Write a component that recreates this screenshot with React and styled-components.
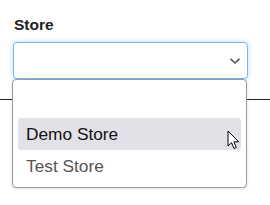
import React from "react";
import styled, { createGlobalStyle } from "styled-components";

const Global = createGlobalStyle`
  html, body { margin: 0; padding: 0; background: #fff; }
  body { font-family: "Liberation Sans", Arial, sans-serif; width: 270px; height: 205px; overflow: hidden; }
`;

const Page = styled.div`
  position: relative;
  width: 270px;
  height: 205px;
`;

const Field = styled.div`
  display: flex;
  flex-direction: column;
  padding: 16px 22px 0 13px;
`;

const Label = styled.label`
  font-size: 15.5px;
  font-weight: 700;
  color: #222;
  line-height: 18px;
  margin-left: 1px;
  margin-bottom: 8px;
`;

const Select = styled.div`
  box-sizing: border-box;
  height: 37px;
  border: 1px solid #72b6ef;
  border-radius: 4px;
  box-shadow: 0 0 4px 1px rgba(110, 175, 240, 0.35);
  display: flex;
  align-items: center;
  justify-content: flex-end;
  padding-right: 6px;
  background: #fff;
`;

const Divider = styled.hr`
  margin: 20px 0 0;
  border: 0;
  border-top: 1px solid #222;
`;

const Menu = styled.ul`
  position: absolute;
  left: 12px;
  top: 79px;
  box-sizing: border-box;
  width: 235px;
  margin: 0;
  padding: 6px 5px 5px;
  list-style: none;
  background: #fff;
  border: 1px solid #9b9b9b;
  border-radius: 4px;
  box-shadow: 0 1px 3px rgba(0, 0, 0, 0.12);
`;

const Option = styled.li`
  height: 32px;
  display: flex;
  align-items: center;
  padding-left: 8px;
  border-radius: 3px;
  font-size: 17.3px;
  color: ${(p) => (p.$active ? "#111" : "#555")};
  background: ${(p) => (p.$active ? "#e2e1e7" : "transparent")};
`;

const Cursor = styled.svg`
  position: absolute;
  left: 227px;
  top: 130px;
`;

export default function App() {
  return (
    <Page>
      <Global />
      <Field>
        <Label>Store</Label>
        <Select>
          <svg width="12" height="8" viewBox="0 0 12 8">
            <path d="M1.5 1.8 L6 6 L10.5 1.8" fill="none" stroke="#555" strokeWidth="1.6" />
          </svg>
        </Select>
      </Field>
      <Divider />
      <Menu>
        <Option />
        <Option $active>Demo Store</Option>
        <Option>Test Store</Option>
      </Menu>
      <Cursor width="14" height="21" viewBox="0 0 14 21">
        <path d="M1 1 L1 16 L4.5 12.6 L7 18.5 L9.3 17.5 L6.9 11.8 L11.7 11.8 Z" fill="#fff" stroke="#000" strokeWidth="1" strokeLinejoin="round" />
      </Cursor>
    </Page>
  );
}
